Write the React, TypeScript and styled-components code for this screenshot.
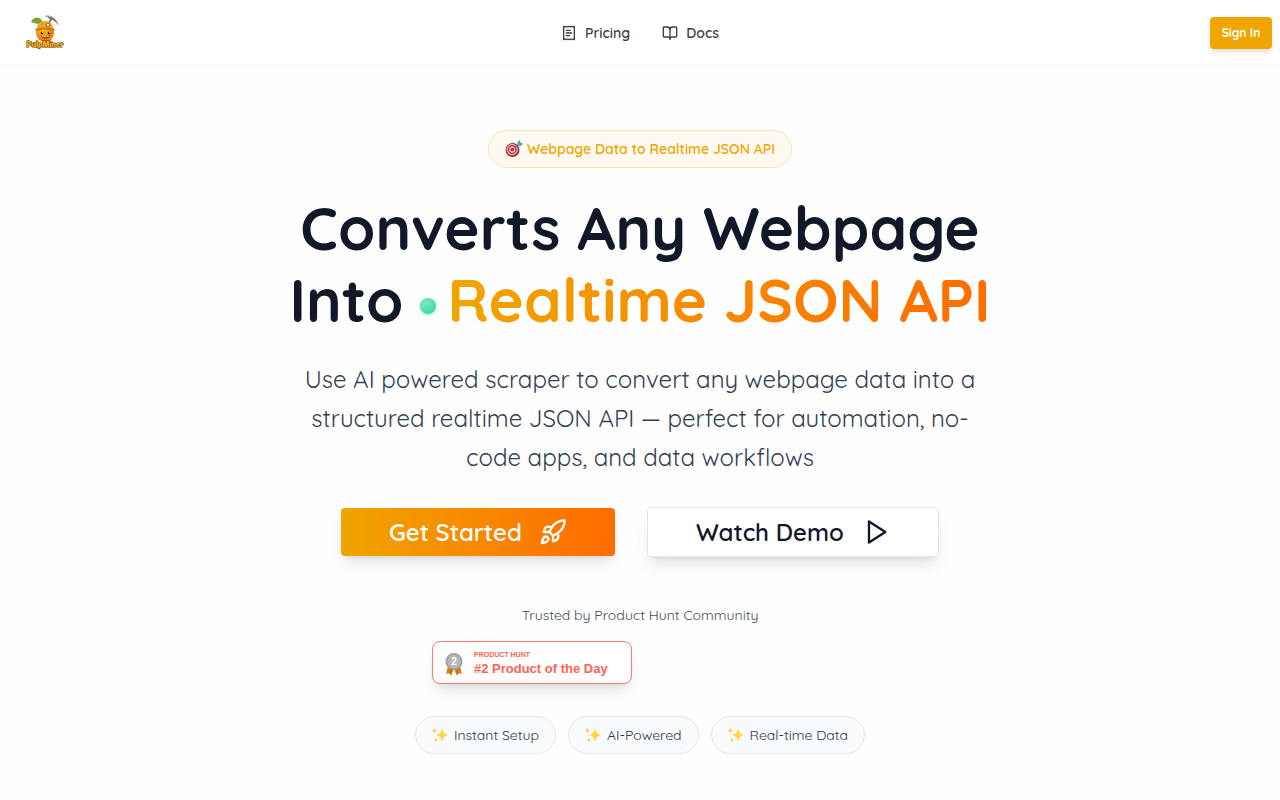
import React from "react";
import styled, { createGlobalStyle, css } from "styled-components";

const Global = createGlobalStyle`
  *, *::before, *::after { box-sizing: border-box; }
  body {
    margin: 0;
    background: #fefefe;
    color: #0f172a;
    font-family: Quicksand, Lato, "Open Sans", sans-serif;
    -webkit-font-smoothing: antialiased;
  }
  h1, p, ul { margin: 0; padding: 0; }
`;

const Header = styled.header`
  display: grid;
  grid-template-columns: 1fr auto 1fr;
  align-items: center;
  height: 66px;
  padding: 0 8px;
  background: #fff;
  border-bottom: 1px solid #fdf6e6;
`;

const LogoLink = styled.a`
  display: flex;
  justify-self: start;
`;

const Nav = styled.nav`
  display: flex;
  gap: 32px;
`;

const NavLink = styled.a`
  display: flex;
  align-items: center;
  gap: 8px;
  color: #3f3f3f;
  font-size: 14px;
  line-height: 20px;
  font-weight: 600;
  text-decoration: none;
`;

const SignIn = styled.button`
  justify-self: end;
  width: 62px;
  height: 32px;
  padding: 0;
  border: 0;
  border-radius: 4px;
  background: #f0a500;
  color: #fff;
  font: inherit;
  font-size: 12px;
  font-weight: 700;
  box-shadow: 0 4px 6px -1px rgba(0, 0, 0, 0.1), 0 2px 4px -2px rgba(0, 0, 0, 0.1);
`;

const Hero = styled.main`
  display: flex;
  flex-direction: column;
  align-items: center;
  padding: 64px 16px 46px;
  text-align: center;
`;

const pill = css`
  display: flex;
  align-items: center;
  justify-content: center;
  gap: 4px;
  height: 38px;
  padding: 0 16px;
  border: 1px solid;
  border-radius: 19px;
  font-size: 14px;
  line-height: 20px;
`;

const Tagline = styled.div`
  ${pill}
  border-color: #fbe4b0;
  background: #fef9f1;
  color: #f0a500;
  font-weight: 600;
`;

const Title = styled.h1`
  margin-top: 24px;
  font-size: 60px;
  line-height: 72px;
  font-weight: 700;
  color: #111827;
`;

const TitleLine = styled.span`
  display: flex;
  flex-wrap: wrap;
  align-items: center;
  justify-content: center;
  column-gap: 12px;
`;

const Dot = styled.span`
  width: 16px;
  height: 16px;
  margin: 12px 0 0 4px;
  border-radius: 50%;
  background: radial-gradient(circle at 35% 30%, #7be8c2, #27d79c);
  box-shadow: 0 1px 3px rgba(52, 211, 153, 0.5);
`;

const Gradient = styled.span`
  background: linear-gradient(90deg, #f0a500, #ff6b00);
  background-clip: text;
  -webkit-background-clip: text;
  color: transparent;
`;

const Lead = styled.p`
  margin-top: 24px;
  font-size: 24px;
  line-height: 39px;
  color: #334155;
`;

const Actions = styled.div`
  display: flex;
  flex-wrap: wrap;
  align-items: center;
  justify-content: center;
  gap: 32px;
  margin-top: 30px;
`;

const Action = styled.button<{ $outline?: boolean }>`
  display: flex;
  align-items: center;
  justify-content: space-between;
  width: ${(p) => (p.$outline ? 292 : 274)}px;
  height: ${(p) => (p.$outline ? 50 : 48)}px;
  padding: 0 48px;
  border: ${(p) => (p.$outline ? "1px solid #e5e7eb" : "0")};
  border-radius: 4px;
  background: ${(p) => (p.$outline ? "#fff" : "linear-gradient(90deg, #f0a500, #ff6b00)")};
  color: ${(p) => (p.$outline ? "#0f172a" : "#fff")};
  font: inherit;
  font-size: 24px;
  font-weight: 600;
  box-shadow: 0 10px 15px -3px rgba(0, 0, 0, 0.1), 0 4px 6px -4px rgba(0, 0, 0, 0.1);
`;

const Trusted = styled.p`
  margin-top: 48px;
  font-size: 14px;
  line-height: 20px;
  color: #3f4b5e;
`;

const Awards = styled.div`
  display: grid;
  grid-template-columns: 200px 200px;
  gap: 16px;
  margin-top: 16px;
`;

const Award = styled.a`
  display: flex;
  align-items: center;
  gap: 10px;
  height: 43px;
  padding: 2px 11px 0;
  border: 1px solid #ff7a6e;
  border-radius: 8px;
  background: #fff;
  color: #ff6154;
  font-family: "Liberation Sans", Arial, sans-serif;
  font-weight: 700;
  text-align: left;
  text-decoration: none;
  box-shadow: 0 10px 15px -3px rgba(0, 0, 0, 0.1), 0 4px 6px -4px rgba(0, 0, 0, 0.1);
`;

const AwardText = styled.span`
  display: flex;
  flex-direction: column;
`;

const AwardSource = styled.span`
  font-size: 7px;
  line-height: 10px;
`;

const AwardTitle = styled.span`
  font-size: 13px;
  line-height: 17px;
`;

const Features = styled.ul`
  display: flex;
  flex-wrap: wrap;
  justify-content: center;
  gap: 12px;
  margin-top: 32px;
  list-style: none;
`;

const Feature = styled.li`
  ${pill}
  border-color: #e5e7eb;
  background: #f8fafc;
  color: #2b384c;
`;

const Icon = ({ size, children }: { size: number; children: React.ReactNode }) => (
  <svg width={size} height={size} viewBox="0 0 24 24" fill="none" stroke="currentColor"
    strokeWidth="2" strokeLinecap="round" strokeLinejoin="round" aria-hidden="true">
    {children}
  </svg>
);

const Logo = () => (
  <svg width="64" height="49" viewBox="8 8 64 49" role="img" aria-label="PulpMiner">
    <defs>
      <radialGradient id="fruit" cx="40%" cy="35%">
        <stop offset="0" stopColor="#ffc02e" />
        <stop offset="1" stopColor="#e98205" />
      </radialGradient>
    </defs>
    <path d="M43 23Q41 17 35 18Q32 19 31 22Q37 25 43 23Z" fill="#6f9a2c" />
    <path d="M32 22Q37 19 42 22" stroke="#a9c552" strokeWidth=".6" fill="none" />
    <path d="M52 18L47 26" stroke="#8b5a2b" strokeWidth="1.6" />
    <path d="M44 16Q55 13 59 26Q54 19 50 19.500Q48 16.500 44 16Z" fill="#7d7a74" />
    <path d="M46 16Q54 15 58 23" stroke="#d4d0c8" strokeWidth=".8" fill="none" />
    <circle cx="45" cy="33" r="9" fill="url(#fruit)" />
    <path d="M37 29Q37 21 45 21Q53 21 53 29Z" fill="#f4a416" />
    <path d="M35 29Q45 26 55 29L54 31Q45 28 36 31Z" fill="#c9780c" />
    <path d="M42 22V28" stroke="#d98c14" strokeWidth=".7" />
    <circle cx="48" cy="25" r="2.3" fill="#83715a" />
    <circle cx="48" cy="25" r="1.2" fill="#f3ead2" />
    <circle cx="42" cy="33" r="1.3" fill="#3b1d08" />
    <circle cx="49" cy="33" r="1.3" fill="#3b1d08" />
    <circle cx="42.5" cy="32.5" r=".5" fill="#fff" />
    <circle cx="49.5" cy="32.5" r=".5" fill="#fff" />
    <path d="M41 35.500Q46 37.500 50 35Q49 39 45 38.500Q42 38.500 41 35.500Z" fill="#8b2408" />
    <path d="M42 36.300Q46 37.800 49 36" stroke="#fff" strokeWidth=".7" fill="none" />
    <text x="45" y="47" textAnchor="middle" fontFamily="Inter, sans-serif" fontSize="7"
      fontWeight="900" fill="#f9b41a" stroke="#5c3207" strokeWidth="1.2" paintOrder="stroke">
      PulpMiner
    </text>
  </svg>
);

const Target = () => (
  <svg width="18" height="18" viewBox="0 0 18 18" aria-hidden="true">
    <circle cx="7.5" cy="10" r="7" fill="#b3202d" />
    <circle cx="7.2" cy="9.6" r="5.6" fill="#f3dcdc" />
    <circle cx="7.2" cy="9.6" r="4.6" fill="#c92d3a" />
    <circle cx="7.2" cy="9.6" r="3.1" fill="#f3dcdc" />
    <circle cx="7.2" cy="9.6" r="1.9" fill="#c92d3a" />
    <path d="M7.5 9.5L14 4" stroke="#4a5c66" strokeWidth="1" />
    <path d="M12 5L12.5 2L15 0L15.5 2.7L18 3.5L16 6L13 6Z" fill="#40afc0" />
  </svg>
);

const Sparkles = () => (
  <svg width="18" height="18" viewBox="0 0 18 18" aria-hidden="true">
    <path d="M10 2Q10.8 8 16 9Q10.8 10 10 16Q9.2 10 4 9Q9.2 8 10 2Z" fill="#fdd545" />
    <path d="M2.500 1.500Q2.900 4 5 4.500Q2.900 5 2.500 7.500Q2.100 5 0 4.500Q2.100 4 2.500 1.500Z" fill="#fbc96b" />
    <path d="M4 11.500Q4.400 13.600 6 14Q4.400 14.400 4 16.500Q3.600 14.400 2 14Q3.600 13.600 4 11.500Z" fill="#fbc96b" />
  </svg>
);

const Medal = () => (
  <svg width="20" height="24" viewBox="0 0 20 24" aria-hidden="true">
    <path d="M4 14L2 22L5.500 21L7 24L10 17L13 24L14.500 21L18 22L16 14Z" fill="#e07c14" />
    <path d="M7 17L6 22M13 17L14 22" stroke="#b9600d" strokeWidth="1" />
    <circle cx="10" cy="9.500" r="8.500" fill="#a0a0a0" />
    <circle cx="10" cy="9.500" r="6.700" fill="#b8b8b8" />
    <text x="10" y="13" textAnchor="middle" fontSize="10" fontWeight="700" fill="#fff">2</text>
  </svg>
);

export default function App() {
  return (
    <>
      <Global />
      <Header>
        <LogoLink href="#"><Logo /></LogoLink>
        <Nav>
          <NavLink href="#pricing">
            <Icon size={16}>
              <path d="M4 2v20l2-1 2 1 2-1 2 1 2-1 2 1 2-1 2 1V2l-2 1-2-1-2 1-2-1-2 1-2-1-2 1Z" />
              <path d="M14 8H8M16 12H8M13 16H8" />
            </Icon>
            Pricing
          </NavLink>
          <NavLink href="#docs">
            <Icon size={16}>
              <path d="M12 7v14" />
              <path d="M3 18a1 1 0 0 1-1-1V4a1 1 0 0 1 1-1h5a4 4 0 0 1 4 4 4 4 0 0 1 4-4h5a1 1 0 0 1 1 1v13a1 1 0 0 1-1 1h-6a3 3 0 0 0-3 3 3 3 0 0 0-3-3z" />
            </Icon>
            Docs
          </NavLink>
        </Nav>
        <SignIn type="button">Sign In</SignIn>
      </Header>
      <Hero>
        <Tagline><Target />Webpage Data to Realtime JSON API</Tagline>
        <Title>
          <TitleLine>Converts Any Webpage</TitleLine>
          <TitleLine>
            <span>Into</span>
            <Dot />
            <Gradient>Realtime JSON API</Gradient>
          </TitleLine>
        </Title>
        <Lead>
          Use AI powered scraper to convert any webpage data into a<br />
          structured realtime JSON API — perfect for automation, no-<br />
          code apps, and data workflows
        </Lead>
        <Actions>
          <Action type="button">
            Get Started
            <Icon size={28}>
              <path d="M4.500 16.500c-1.500 1.260-2 5-2 5s3.740-.5 5-2c.71-.84.7-2.130-.09-2.910a2.180 2.180 0 0 0-2.910-.09z" />
              <path d="m12 15-3-3a22 22 0 0 1 2-3.950A12.880 12.880 0 0 1 22 2c0 2.720-.78 7.500-6 11a22.350 22.350 0 0 1-4 2z" />
              <path d="M9 12H4s.55-3.030 2-4c1.620-1.080 5 0 5 0" />
              <path d="M12 15v5s3.030-.55 4-2c1.080-1.620 0-5 0-5" />
            </Icon>
          </Action>
          <Action type="button" $outline>
            Watch Demo
            <Icon size={28}><path d="M6 3L20 12L6 21Z" /></Icon>
          </Action>
        </Actions>
        <Trusted>Trusted by Product Hunt Community</Trusted>
        <Awards>
          <Award href="#product-hunt">
            <Medal />
            <AwardText>
              <AwardSource>PRODUCT HUNT</AwardSource>
              <AwardTitle>#2 Product of the Day</AwardTitle>
            </AwardText>
          </Award>
        </Awards>
        <Features>
          <Feature><Sparkles />Instant Setup</Feature>
          <Feature><Sparkles />AI-Powered</Feature>
          <Feature><Sparkles />Real-time Data</Feature>
        </Features>
      </Hero>
    </>
  );
}
